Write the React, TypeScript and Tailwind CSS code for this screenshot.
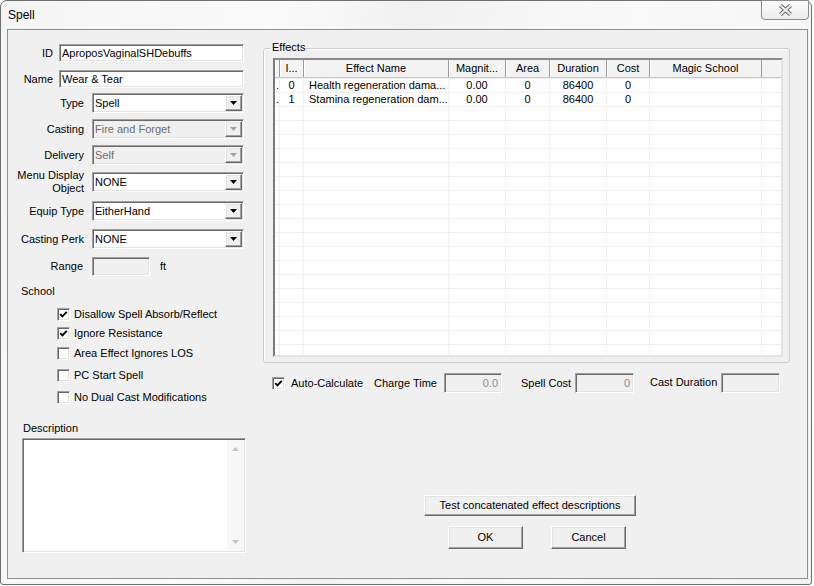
import React from "react";

const sunken =
  "border border-t-[#a0a0a0] border-l-[#a0a0a0] border-r-white border-b-white shadow-[inset_1px_1px_0_#696969,inset_-1px_-1px_0_#e3e3e3]";
const raised =
  "border border-t-white border-l-white border-r-[#696969] border-b-[#696969] shadow-[inset_-1px_-1px_0_#a0a0a0,inset_1px_1px_0_#e3e3e3]";

function DropArrow({ disabled }: { disabled?: boolean }) {
  return (
    <div className={`${raised} w-[17px] h-[16px] mr-[1px] bg-[#f0f0f0] flex items-center justify-center shrink-0`}>
      <svg width="7" height="4" viewBox="0 0 7 4">
        <path d="M0 0H7L3.5 4Z" fill={disabled ? "#a3a3a3" : "#000"} />
      </svg>
    </div>
  );
}

function Combo({ value, disabled }: { value: string; disabled?: boolean }) {
  return (
    <div
      className={`${sunken} w-[152px] h-[20px] flex items-center ${
        disabled ? "bg-[#f0f0f0] text-[#6d6d6d]" : "bg-white text-black"
      }`}
    >
      <span className="flex-1 pl-[2px] leading-[13px] whitespace-nowrap">{value}</span>
      <DropArrow disabled={disabled} />
    </div>
  );
}

function Check({ checked }: { checked?: boolean }) {
  return (
    <div className={`${sunken} w-[13px] h-[13px] bg-white flex items-center justify-center shrink-0`}>
      {checked && (
        <svg width="9" height="9" viewBox="0 0 9 9">
          <path d="M1.2 4.2 L3.4 6.4 L7.8 1.8" stroke="#000" strokeWidth="1.9" fill="none" />
        </svg>
      )}
    </div>
  );
}

function ComboRow({
  label,
  value,
  disabled,
  className,
}: {
  label: React.ReactNode;
  value: string;
  disabled?: boolean;
  className: string;
}) {
  return (
    <div className={`flex items-center h-[20px] ${className}`}>
      <div className="w-[76px] text-right leading-[13px]">{label}</div>
      <div className="ml-[8px]">
        <Combo value={value} disabled={disabled} />
      </div>
    </div>
  );
}

const colW = ["w-[5px]", "w-[24px]", "w-[145px]", "w-[57px]", "w-[44px]", "w-[57px]", "w-[43px]", "w-[112px]"];
const heads = ["", "I...", "Effect Name", "Magnit...", "Area", "Duration", "Cost", "Magic School"];
const rows: string[][] = [
  [".", "0", "Health regeneration dama...", "0.00", "0", "86400", "0", ""],
  [".", "1", "Stamina regeneration dam...", "0.00", "0", "86400", "0", ""],
];

function EffectsList() {
  const all = Array.from({ length: 20 }, (_, i) => rows[i] || ["", "", "", "", "", "", "", ""]);
  return (
    <div className="border-2 border-t-[#8a8a8a] border-l-[#7a7a7a] border-r-[#e3e3e3] border-b-[#e3e3e3] w-[510px] h-[299px] bg-white overflow-hidden">
      <div className="flex h-[18px] bg-[#f3f3f3] border-b border-b-[#c8c8c8]">
        {heads.map((h, i) => (
          <div
            key={i}
            className={`${colW[i]} shrink-0 h-full border-r border-r-[#9a9a9a] shadow-[inset_1px_0_0_#ffffff] flex items-center justify-center whitespace-nowrap overflow-hidden leading-[13px]`}
          >
            {h}
          </div>
        ))}
        <div className="flex-1" />
      </div>
      {all.map((r, ri) => (
        <div key={ri} className="flex h-[14px] border-t border-t-[#f0f0f0]">
          {r.map((c, ci) => (
            <div
              key={ci}
              className={`${colW[ci]} shrink-0 h-full border-r border-r-[#f0f0f0] flex items-center whitespace-nowrap overflow-hidden leading-[13px] ${
                ci === 2 ? "pl-[5px]" : ci === 0 ? "pl-[1px]" : "justify-center"
              }`}
            >
              {c}
            </div>
          ))}
          <div className="flex-1" />
        </div>
      ))}
    </div>
  );
}

function ReadOnly({ w, value }: { w: string; value?: string }) {
  return (
    <div className={`${sunken} ${w} h-[20px] bg-[#f0f0f0] text-[#8a8a8a] flex items-center justify-end pr-[3px] leading-[13px]`}>
      {value}
    </div>
  );
}

function Button({ children, className }: { children: React.ReactNode; className: string }) {
  return (
    <div className={`${raised} bg-[#f0f0f0] flex items-center justify-center leading-[13px] ${className}`}>
      {children}
    </div>
  );
}

export default function App() {
  return (
    <div className="w-[814px] h-[586px] bg-white overflow-hidden font-['Liberation_Sans',Arial,sans-serif] text-[11px] text-black">
      <div className="relative w-[812px] h-[585px] rounded-t-[7px] rounded-b-[3px] border border-[#6e6e6e] bg-[linear-gradient(100deg,#f4f4f4_0%,#fbfbfb_30%,#f1f1f1_45%,#fafafa_70%,#f2f2f2_100%)] flex flex-col">
        {/* Title bar */}
        <div className="h-[28px] flex items-center pl-[7px] text-[12px] leading-[14px] text-black">Spell</div>
        <div className="absolute left-[760px] top-[-1px] w-[48px] h-[20px] rounded-b-[4px] border border-[#8c8c8c] bg-[linear-gradient(to_bottom,#fdfdfd,#ececec)] flex items-center justify-center">
          <svg width="15" height="12" viewBox="0 0 15 12">
            <path d="M2.5 1.5 L12.5 10.5 M12.5 1.5 L2.5 10.5" stroke="#6a6a6a" strokeWidth="4.2" />
            <path d="M2.5 1.5 L12.5 10.5 M12.5 1.5 L2.5 10.5" stroke="#ebebeb" strokeWidth="2.2" />
          </svg>
        </div>

        {/* Client area */}
        <div className="ml-[6px] w-[801px] h-[550px] border border-[#8e8f8f] bg-[#f0f0f0] flex">
          {/* Left column */}
          <div className="w-[255px] shrink-0 flex flex-col">
            <div className="flex items-center h-[18px] mt-[14px]">
              <div className="w-[45px] text-right leading-[13px]">ID</div>
              <div className={`${sunken} ml-[6px] w-[185px] h-[18px] bg-white flex items-center pl-[2px] leading-[13px]`}>
                AproposVaginalSHDebuffs
              </div>
            </div>
            <div className="flex items-center h-[18px] mt-[8px]">
              <div className="w-[45px] text-right leading-[13px]">Name</div>
              <div className={`${sunken} ml-[6px] w-[185px] h-[18px] bg-white flex items-center pl-[2px] leading-[13px]`}>
                Wear &amp; Tear
              </div>
            </div>
            <ComboRow className="mt-[5px]" label="Type" value="Spell" />
            <ComboRow className="mt-[6px]" label="Casting" value="Fire and Forget" disabled />
            <ComboRow className="mt-[6px]" label="Delivery" value="Self" disabled />
            <ComboRow
              className="mt-[7px]"
              label={
                <>
                  Menu Display
                  <br />
                  Object
                </>
              }
              value="NONE"
            />
            <ComboRow className="mt-[9px]" label="Equip Type" value="EitherHand" />
            <ComboRow className="mt-[8px]" label="Casting Perk" value="NONE" />
            <div className="flex items-center h-[19px] mt-[8px]">
              <div className="w-[75px] text-right leading-[13px]">Range</div>
              <div className={`${sunken} ml-[9px] w-[58px] h-[19px] bg-[#f0f0f0]`} />
              <div className="ml-[10px] leading-[13px]">ft</div>
            </div>
            <div className="mt-[9px] ml-[13px] leading-[13px] h-[13px]">School</div>
            {[
              ["Disallow Spell Absorb/Reflect", true, "mt-[10px]"],
              ["Ignore Resistance", true, "mt-[6px]"],
              ["Area Effect Ignores LOS", false, "mt-[7px]"],
              ["PC Start Spell", false, "mt-[9px]"],
              ["No Dual Cast Modifications", false, "mt-[9px]"],
            ].map(([t, c, m], i) => (
              <div key={i} className={`flex items-center h-[13px] ml-[49px] ${m as string}`}>
                <Check checked={c as boolean} />
                <span className="ml-[4px] leading-[13px] whitespace-nowrap">{t as string}</span>
              </div>
            ))}
            <div className="mt-[18px] ml-[15px] leading-[13px] h-[13px]">Description</div>
            <div className={`${sunken} mt-[3px] ml-[14px] w-[224px] h-[115px] bg-white flex p-[1px]`}>
              <div className="flex-1" />
              <div className="w-[17px] h-full bg-[#f7f7f7] flex flex-col items-center justify-between py-[7px]">
                <svg width="7" height="4" viewBox="0 0 7 4">
                  <path d="M0 4H7L3.5 0Z" fill="#c3c3c3" />
                </svg>
                <svg width="7" height="4" viewBox="0 0 7 4">
                  <path d="M0 0H7L3.5 4Z" fill="#c3c3c3" />
                </svg>
              </div>
            </div>
          </div>

          {/* Right column */}
          <div className="w-[527px] shrink-0 flex flex-col">
            <div className="relative mt-[18px] h-[315px] border border-[#cdcdcd] rounded-[3px] shadow-[inset_1px_1px_0_#ffffff]">
              <div className="absolute left-[7px] top-[-8px] px-[1px] bg-[#f0f0f0] leading-[13px]">Effects</div>
              <div className="ml-[9px] mt-[9px]">
                <EffectsList />
              </div>
            </div>

            <div className="flex items-center h-[20px] mt-[10px]">
              <div className="ml-[9px]">
                <Check checked />
              </div>
              <span className="ml-[6px] w-[83px] leading-[13px] whitespace-nowrap">Auto-Calculate</span>
              <span className="w-[70px] leading-[13px] whitespace-nowrap">Charge Time</span>
              <ReadOnly w="w-[58px]" value="0.0" />
              <span className="ml-[19px] w-[54px] leading-[13px] whitespace-nowrap">Spell Cost</span>
              <ReadOnly w="w-[59px]" value="0" />
              <span className="ml-[16px] w-[71px] leading-[13px] whitespace-nowrap mb-[2px]">Cast Duration</span>
              <ReadOnly w="w-[59px]" />
            </div>

            <Button className="mt-[102px] ml-[161px] w-[212px] h-[21px]">Test concatenated effect descriptions</Button>
            <div className="flex mt-[10px] ml-[185px]">
              <Button className="w-[75px] h-[23px]">OK</Button>
              <Button className="ml-[28px] w-[75px] h-[23px]">Cancel</Button>
            </div>
          </div>
        </div>
      </div>
    </div>
  );
}
